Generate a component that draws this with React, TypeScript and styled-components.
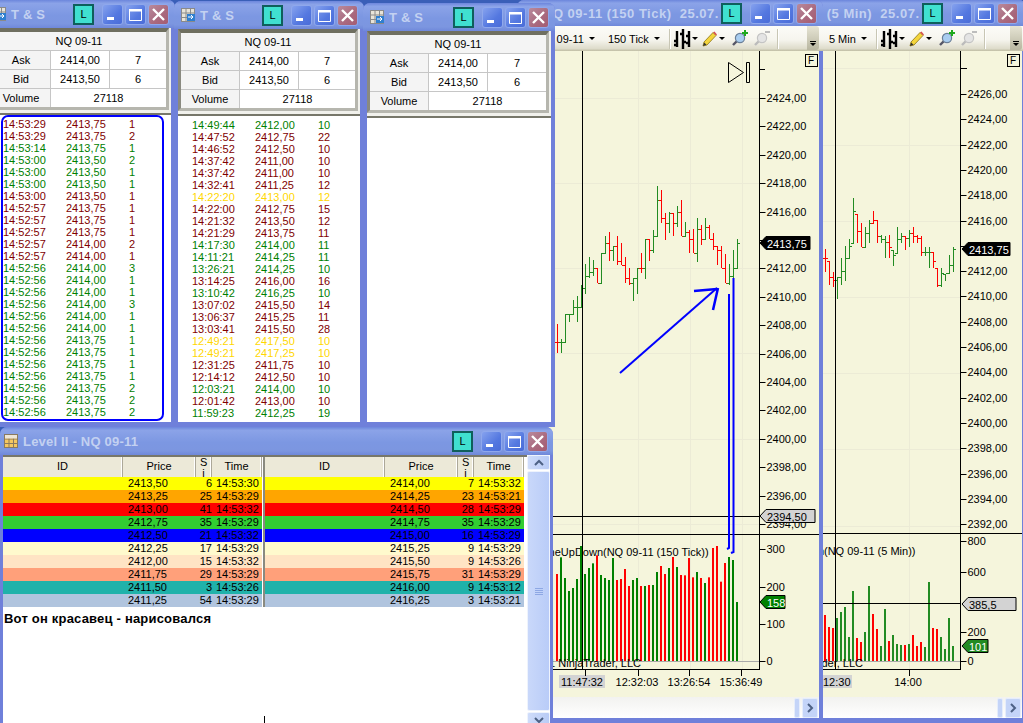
import type { ReactNode } from 'react';
import styled, { createGlobalStyle } from 'styled-components';

const GlobalStyle = createGlobalStyle`
  html, body {
    margin: 0;
    height: 100%;
    overflow: hidden;
    background: #3a5fb8;
  }
  #root {
    height: 100%;
  }
  * {
    box-sizing: border-box;
  }
`;

const FONT = '"Liberation Sans", Arial, sans-serif';
const RED = '#800000';
const GREEN = '#008000';
const GOLD = '#ffd700';

const Desktop = styled.div`
  position: relative;
  width: 1023px;
  height: 723px;
  overflow: hidden;
  font-family: ${FONT};
  font-size: 11px;
  color: #000;
`;

const Frame = styled.div<{ $left: number; $top: number; $width: number; $height: number; $z: number }>`
  position: absolute;
  left: ${({ $left }) => $left}px;
  top: ${({ $top }) => $top}px;
  width: ${({ $width }) => $width}px;
  height: ${({ $height }) => $height}px;
  z-index: ${({ $z }) => $z};
  display: flex;
  flex-direction: column;
  background: #6f80da;
  border-radius: 7px 7px 0 0;
  padding: 0 4px;
`;

const TitleBar = styled.div<{ $height: number; $padLeft?: number; $padRight?: number }>`
  flex: none;
  height: ${({ $height }) => $height}px;
  margin: 0 -4px;
  padding: 0 ${({ $padRight }) => $padRight ?? 6}px 0 ${({ $padLeft }) => $padLeft ?? 7}px;
  display: flex;
  align-items: center;
  border-radius: 7px 7px 0 0;
  background: linear-gradient(180deg, #6c86dc 0%, #8ba3e8 12%, #7c97e2 55%, #7c96e0 85%, #6f88da 100%);
`;

const TitleText = styled.div<{ $wide?: boolean }>`
  flex: 1;
  min-width: 0;
  margin-left: 5px;
  overflow: hidden;
  white-space: pre;
  font-size: 13px;
  font-weight: bold;
  letter-spacing: ${({ $wide }) => ($wide ? '0.5px' : '0.2px')};
  color: #c3d1f1;
`;

const LinkButton = styled.div`
  flex: none;
  width: 21px;
  height: 21px;
  margin-right: 6px;
  display: flex;
  align-items: center;
  justify-content: center;
  border: 2px solid #0f5f5c;
  background: #40e0d0;
  font-size: 11px;
`;

const CaptionButton = styled.div<{ $close?: boolean }>`
  flex: none;
  width: 21px;
  height: 21px;
  margin-left: 2px;
  display: flex;
  align-items: center;
  justify-content: center;
  border-radius: 3px;
  border: 1px solid #8fa8ec;
  background: ${({ $close }) =>
    $close
      ? 'linear-gradient(135deg, #b98a9c 0%, #a9697e 60%, #a45c72 100%)'
      : 'linear-gradient(135deg, #86a2ee 0%, #5478e0 60%, #4a6cd8 100%)'};
`;

const GridIcon = () => (
  <svg width="14" height="14" viewBox="0 0 14 14">
    <rect x="0.5" y="0.5" width="13" height="13" fill="#e8e4d8" stroke="#8a8a8a" />
    <path d="M0 5h14M0 9.5h14M5 0v14M9.5 0v14" stroke="#8a8a8a" />
    <rect x="6" y="6" width="8" height="7" fill="#2f7fd0" />
    <path d="M7 9h5M10 7l2 2-2 2" stroke="#fff" fill="none" />
  </svg>
);

const LevelIcon = () => (
  <svg width="14" height="14" viewBox="0 0 14 14">
    <rect x="0.5" y="0.5" width="13" height="13" fill="#f6c860" stroke="#8a7a60" />
    <path d="M0 5h14M0 9.5h14M5 0v14M9.5 0v14" stroke="#8a7a60" />
    <rect x="1" y="1" width="12" height="3.5" fill="#eee6d8" />
  </svg>
);

const CaptionButtons = () => (
  <>
    <LinkButton>L</LinkButton>
    <CaptionButton>
      <svg width="13" height="13" viewBox="0 0 13 13">
        <rect x="1" y="9" width="7" height="3" fill="#fff" />
      </svg>
    </CaptionButton>
    <CaptionButton>
      <svg width="15" height="15" viewBox="0 0 15 15">
        <path d="M1.5 3.5h12v10h-12z" fill="none" stroke="#fff" />
        <rect x="1" y="2" width="13" height="2.5" fill="#fff" />
      </svg>
    </CaptionButton>
    <CaptionButton $close>
      <svg width="15" height="15" viewBox="0 0 15 15">
        <path d="M2 2l11 11M13 2L2 13" stroke="#fff" strokeWidth="2.4" />
      </svg>
    </CaptionButton>
  </>
);

/* T&S windows */

const QuoteGrid = styled.div`
  flex: none;
  width: calc(100% - 2px);
  display: grid;
  grid-template-columns: 58px 58px 1fr;
  grid-auto-rows: 18px;
  gap: 1px;
  border: 3px solid #b6b6ae;
  border-top: 4px solid #6f6f60;
  border-left-color: #8a8a80;
  background: #c6c6c6;
  box-shadow: 2px 0 0 #f1f1ec;
`;

const QuoteCell = styled.div<{ $span?: number; $shade?: boolean }>`
  grid-column: span ${({ $span }) => $span ?? 1};
  display: flex;
  align-items: center;
  justify-content: center;
  background: ${({ $shade }) => ($shade ? '#f4f4f4' : '#fff')};
`;

const TradeList = styled.div`
  flex: 1;
  min-height: 0;
  margin: 3px 0 5px;
  padding: 3px 0 0 14px;
  border-top: 2px solid #77776a;
  background: #fff;
  box-shadow: 0 -3px 0 #f1f1ec;
`;

const TradeRow = styled.div<{ $color: string }>`
  display: grid;
  grid-template-columns: 63px 63px 1fr;
  height: 12px;
  line-height: 12px;
  white-space: nowrap;
  color: ${({ $color }) => $color};
`;

type Trade = [string, string, string, string];

const tradesA: Trade[] = [
  ['14:53:29', '2413,75', '1', RED], ['14:53:29', '2413,75', '2', RED], ['14:53:14', '2413,75', '1', GREEN],
  ['14:53:00', '2413,50', '2', GREEN], ['14:53:00', '2413,50', '1', GREEN], ['14:53:00', '2413,50', '1', GREEN],
  ['14:53:00', '2413,50', '1', RED], ['14:52:57', '2413,75', '1', RED], ['14:52:57', '2413,75', '1', RED],
  ['14:52:57', '2413,75', '1', RED], ['14:52:57', '2414,00', '2', RED], ['14:52:57', '2414,00', '1', RED],
  ['14:52:56', '2414,00', '3', GREEN], ['14:52:56', '2414,00', '1', GREEN], ['14:52:56', '2414,00', '1', GREEN],
  ['14:52:56', '2414,00', '3', GREEN], ['14:52:56', '2414,00', '1', GREEN], ['14:52:56', '2414,00', '1', GREEN],
  ['14:52:56', '2413,75', '1', GREEN], ['14:52:56', '2413,75', '1', GREEN], ['14:52:56', '2413,75', '1', GREEN],
  ['14:52:56', '2413,75', '1', GREEN], ['14:52:56', '2413,75', '2', GREEN], ['14:52:56', '2413,75', '2', GREEN],
  ['14:52:56', '2413,75', '2', GREEN],
];

const tradesB: Trade[] = [
  ['14:49:44', '2412,00', '10', GREEN], ['14:47:52', '2412,75', '22', RED], ['14:46:52', '2412,50', '10', RED],
  ['14:37:42', '2411,00', '10', RED], ['14:37:42', '2411,00', '10', RED], ['14:32:41', '2411,25', '12', RED],
  ['14:22:20', '2413,00', '12', GOLD], ['14:22:00', '2412,75', '15', RED], ['14:21:32', '2413,50', '12', RED],
  ['14:21:29', '2413,75', '11', RED], ['14:17:30', '2414,00', '11', GREEN], ['14:11:21', '2414,25', '11', GREEN],
  ['13:26:21', '2414,25', '10', GREEN], ['13:14:25', '2416,00', '16', RED], ['13:10:42', '2416,25', '10', GREEN],
  ['13:07:02', '2415,50', '14', RED], ['13:06:37', '2415,25', '11', RED], ['13:03:41', '2415,50', '28', RED],
  ['12:49:21', '2417,50', '10', GOLD], ['12:49:21', '2417,25', '10', GOLD], ['12:31:25', '2411,75', '10', RED],
  ['12:14:12', '2412,50', '10', RED], ['12:03:21', '2414,00', '10', GREEN], ['12:01:42', '2413,00', '10', RED],
  ['11:59:23', '2412,25', '19', GREEN],
];

const TimeSalesWindow = ({ left, top, width, z, trades }: { left: number; top: number; width: number; z: number; trades: Trade[] }) => (
  <Frame $left={left} $top={top} $width={width} $height={427 - top} $z={z}>
    <TitleBar $height={28}>
      <GridIcon />
      <TitleText>T &amp; S</TitleText>
      <CaptionButtons />
    </TitleBar>
    <QuoteGrid>
      <QuoteCell $span={3} $shade>NQ 09-11</QuoteCell>
      <QuoteCell $shade>Ask</QuoteCell>
      <QuoteCell>2414,00</QuoteCell>
      <QuoteCell>7</QuoteCell>
      <QuoteCell $shade>Bid</QuoteCell>
      <QuoteCell>2413,50</QuoteCell>
      <QuoteCell>6</QuoteCell>
      <QuoteCell $shade>Volume</QuoteCell>
      <QuoteCell $span={2}>27118</QuoteCell>
    </QuoteGrid>
    <TradeList>
      {trades.map((t, i) => (
        <TradeRow key={i} $color={t[3]}>
          <span>{t[0]}</span>
          <span>{t[1]}</span>
          <span>{t[2]}</span>
        </TradeRow>
      ))}
    </TradeList>
  </Frame>
);

/* Level II */

const LevelBody = styled.div`
  flex: 1;
  min-height: 0;
  margin: 0 -1px;
  display: flex;
  background: #fff;
`;

const LevelMain = styled.div`
  position: relative;
  flex: 1;
  min-width: 0;
  padding-right: 3px;
  background: #fff;
  border-top: 2px solid #77776a;
`;

const Books = styled.div`
  display: flex;
  gap: 3px;
`;

const Book = styled.div`
  width: 259px;
  & + & {
    box-shadow: -2px 0 0 #8a8a80;
  }
`;

const depthColumns = '120px 73px 16px 1fr';

const BookHeader = styled.div`
  display: grid;
  grid-template-columns: ${depthColumns};
  height: 20px;
  background: #ece9d8;
`;

const HeaderCell = styled.div<{ $narrow?: boolean }>`
  overflow: hidden;
  text-align: center;
  padding: 0 ${({ $narrow }) => ($narrow ? '4px' : '0')};
  line-height: ${({ $narrow }) => ($narrow ? '11px' : '19px')};
  word-break: break-all;
  border-right: 1px solid #aca899;
  box-shadow: inset -1px 0 0 #fff;
`;

const DepthRow = styled.div<{ $bg: string }>`
  display: grid;
  grid-template-columns: ${depthColumns};
  height: 13px;
  line-height: 13px;
  white-space: nowrap;
  background: ${({ $bg }) => $bg};
`;

const PriceCell = styled.span`
  padding-left: 5px;
`;

const SizeCell = styled.span`
  text-align: right;
`;

const TimeCell = styled.span`
  padding-left: 4px;
`;

const Note = styled.div`
  padding: 4px 0 0 1px;
  font-size: 13px;
  font-weight: bold;
  letter-spacing: 0.2px;
`;

const CaretMark = styled.div`
  position: absolute;
  left: 261px;
  bottom: 0;
  width: 1px;
  height: 11px;
  background: #000;
`;

const ScrollBar = styled.div`
  flex: none;
  width: 23px;
  display: flex;
  flex-direction: column;
  gap: 1px;
  background: #fff;
`;

const ScrollButton = styled.div`
  flex: none;
  height: 15px;
  display: flex;
  align-items: center;
  justify-content: center;
  border-radius: 2px;
  border: 1px solid #eef3fd;
  background: linear-gradient(90deg, #cfdcfa, #b8cbf6);
`;

const ScrollTrack = styled.div`
  flex: 1;
  display: flex;
  flex-direction: column;
  align-items: center;
  justify-content: center;
  gap: 1px;
  border-radius: 2px;
  border: 1px solid #eef3fd;
  background: linear-gradient(90deg, #c9d8fa, #b9ccf8);
`;

const GripLine = styled.div`
  width: 8px;
  height: 1px;
  background: #8ea8e4;
`;

const bookColors = ['#ffff00', '#ffa500', '#ff0000', '#32cd32', '#0000ff', '#fffacd', '#ffe4c4', '#ffa07a', '#20b2aa', '#b0c4de'];

const bidRows = [
  ['2413,50', '6', '14:53:30'], ['2413,25', '25', '14:53:29'], ['2413,00', '41', '14:53:32'],
  ['2412,75', '35', '14:53:29'], ['2412,50', '21', '14:53:32'], ['2412,25', '17', '14:53:29'],
  ['2412,00', '15', '14:53:32'], ['2411,75', '29', '14:53:29'], ['2411,50', '3', '14:53:26'],
  ['2411,25', '54', '14:53:29'],
];

const askRows = [
  ['2414,00', '7', '14:53:32'], ['2414,25', '23', '14:53:21'], ['2414,50', '28', '14:53:29'],
  ['2414,75', '35', '14:53:29'], ['2415,00', '16', '14:53:29'], ['2415,25', '9', '14:53:29'],
  ['2415,50', '9', '14:53:26'], ['2415,75', '31', '14:53:29'], ['2416,00', '9', '14:53:12'],
  ['2416,25', '3', '14:53:21'],
];

const DepthBook = ({ rows }: { rows: string[][] }) => (
  <Book>
    <BookHeader>
      <HeaderCell>ID</HeaderCell>
      <HeaderCell>Price</HeaderCell>
      <HeaderCell $narrow>Si</HeaderCell>
      <HeaderCell>Time</HeaderCell>
    </BookHeader>
    {rows.map((r, i) => (
      <DepthRow key={i} $bg={bookColors[i]}>
        <span />
        <PriceCell>{r[0]}</PriceCell>
        <SizeCell>{r[1]}</SizeCell>
        <TimeCell>{r[2]}</TimeCell>
      </DepthRow>
    ))}
  </Book>
);

const LevelWindow = () => (
  <Frame $left={0} $top={427} $width={553} $height={300} $z={5}>
    <TitleBar $height={28} $padLeft={4} $padRight={5}>
      <LevelIcon />
      <TitleText>Level II - NQ 09-11</TitleText>
      <CaptionButtons />
    </TitleBar>
    <LevelBody>
      <LevelMain>
        <Books>
          <DepthBook rows={bidRows} />
          <DepthBook rows={askRows} />
        </Books>
        <Note>Вот он красавец - нарисовался</Note>
        <CaretMark />
      </LevelMain>
      <ScrollBar>
        <ScrollButton>
          <svg width="10" height="8" viewBox="0 0 10 8"><path d="M1 6l4-4 4 4" fill="none" stroke="#4d6185" strokeWidth="2" /></svg>
        </ScrollButton>
        <ScrollTrack>
          {[0, 1, 2, 3].map(i => <GripLine key={i} />)}
        </ScrollTrack>
        <ScrollButton>
          <svg width="10" height="8" viewBox="0 0 10 8"><path d="M1 2l4 4 4-4" fill="none" stroke="#4d6185" strokeWidth="2" /></svg>
        </ScrollButton>
      </ScrollBar>
    </LevelBody>
  </Frame>
);

/* Chart windows */

const Toolbar = styled.div`
  flex: none;
  height: 25px;
  margin-right: -4px;
  display: flex;
  align-items: center;
  padding-left: 16px;
  font-size: 11px;
  background: linear-gradient(180deg, #fcfcf8 0%, #f6f5ee 55%, #dedccb 90%, #bfbda4 100%);
  white-space: nowrap;
`;

const ToolText = styled.span`
  margin-right: 5px;
`;

const Caret = styled.i<{ $before?: number; $after?: number }>`
  flex: none;
  width: 0;
  height: 0;
  margin-left: ${({ $before }) => $before ?? 0}px;
  margin-right: ${({ $after }) => $after ?? 0}px;
  border: 3px solid transparent;
  border-top: 3px solid #000;
  border-bottom: 0;
`;

const ToolSep = styled.i<{ $before: number; $after: number }>`
  flex: none;
  width: 1px;
  height: 20px;
  margin: 0 ${({ $after }) => $after}px 0 ${({ $before }) => $before}px;
  background: #c8c6b4;
  box-shadow: 1px 0 0 #fff;
`;

const ZoomGap = styled.i`
  flex: none;
  width: 5px;
`;

const OverflowTab = styled.div`
  position: absolute;
  right: 4px;
  top: 26px;
  width: 12px;
  height: 24px;
  display: flex;
  flex-direction: column;
  align-items: center;
  justify-content: flex-end;
  gap: 1px;
  padding-bottom: 4px;
  border-radius: 0 3px 3px 0;
  background: linear-gradient(180deg, #e6e4d4, #b8b6a0);
`;

const OverflowBar = styled.b`
  width: 6px;
  height: 1px;
  background: #000;
`;

const ChartCanvas = styled.svg`
  flex: none;
  display: block;
  background: #f5f5dc;
`;

const BottomStrip = styled.div`
  flex: none;
  height: 21px;
  display: flex;
  align-items: center;
  justify-content: flex-end;
  gap: 2px;
  padding-right: 1px;
  background: linear-gradient(180deg, #f2f2f0 0%, #ffffff 100%);
`;

const StripThumb = styled.div`
  width: 6px;
  height: 20px;
  border: 1px solid #e6edfb;
  border-radius: 2px;
  background: #c4d4f8;
`;

const StripButton = styled.div`
  width: 16px;
  height: 20px;
  display: flex;
  align-items: center;
  justify-content: center;
  border: 1px solid #e6edfb;
  border-radius: 2px;
  background: #c4d4f8;
`;

const BottomEdge = styled.div`
  flex: 1;
  margin: 0 -4px;
  background: #6f80da;
`;

const BarsIcon = () => (
  <svg width="19" height="22" viewBox="0 0 19 22">
    <path d="M4 3v16M10 1v20M16 3v16" stroke="#000" strokeWidth="2.4" />
    <path d="M1 13h3M1 17h3M10 6h-3M10 14h3M13 8h3M13 15h3" stroke="#000" strokeWidth="2.4" />
  </svg>
);

const PencilIcon = () => (
  <svg width="16" height="16" viewBox="0 0 16 16">
    <path d="M2 11L11 1.5l3 3L5 14l-4 1z" fill="#f4d53c" stroke="#8a7414" strokeWidth="0.8" />
    <path d="M11 1.5l3 3 1-1-2.5-3z" fill="#d65050" />
    <path d="M1 15l1.2-3.5 2.3 2.3z" fill="#333" />
  </svg>
);

const ZoomIcon = ({ dim }: { dim?: boolean }) => (
  <svg width="17" height="17" viewBox="0 0 17 17">
    <path d="M2 15l4-4" stroke={dim ? '#bbb' : '#556'} strokeWidth="2.4" />
    <circle cx="9" cy="8" r="4.6" fill={dim ? '#e4e4e4' : '#a9cdf0'} stroke={dim ? '#c4c4c4' : '#6a7f98'} strokeWidth="1.2" />
    {dim ? (
      <path d="M12 2h5" stroke="#bdbdbd" strokeWidth="2" />
    ) : (
      <path d="M14 0v6M11 3h6" stroke="#1faa1f" strokeWidth="2" />
    )}
  </svg>
);

const ChartTools = ({ period, afterSymbol }: { period: string; afterSymbol: number }) => (
  <>
    <ToolText>NQ 09-11</ToolText>
    <Caret $after={afterSymbol} />
    <ToolText>{period}</ToolText>
    <Caret />
    <ToolSep $before={9} $after={3} />
    <BarsIcon />
    <Caret $after={4} />
    <PencilIcon />
    <Caret $before={1} $after={6} />
    <ZoomIcon />
    <ZoomGap />
    <ZoomIcon dim />
    <ToolSep $before={7} $after={0} />
  </>
);

type Ohlc = [number, number, number, 'r' | 'g'];

const bars1: Ohlc[] = [
  [462, 550, 517, 'r'], [507, 550, 517, 'g'], [432, 518, 432, 'g'], [432, 456, 432, 'g'], [390, 432, 411, 'g'],
  [378, 456, 411, 'g'], [345, 411, 355, 'g'], [282, 372, 318, 'g'], [260, 324, 305, 'g'], [270, 318, 295, 'g'],
  [294, 340, 340, 'r'], [250, 340, 250, 'g'], [198, 250, 220, 'g'], [186, 272, 240, 'r'], [228, 272, 228, 'g'],
  [198, 285, 272, 'r'], [220, 285, 285, 'r'], [262, 340, 325, 'r'], [294, 345, 338, 'r'], [325, 392, 325, 'g'],
  [294, 372, 294, 'g'], [250, 308, 294, 'r'], [207, 326, 207, 'g'], [207, 274, 240, 'r'], [180, 250, 198, 'g'],
  [48, 200, 90, 'g'], [60, 158, 144, 'r'], [130, 210, 158, 'r'], [125, 188, 130, 'g'], [130, 198, 158, 'r'],
  [108, 170, 125, 'g'], [90, 198, 198, 'r'], [155, 198, 185, 'g'], [180, 250, 207, 'r'], [178, 250, 250, 'r'],
  [145, 275, 178, 'g'], [165, 225, 207, 'r'], [145, 208, 170, 'g'], [165, 208, 207, 'r'], [190, 240, 228, 'r'],
  [228, 285, 240, 'r'], [228, 295, 295, 'r'], [252, 340, 340, 'r'], [282, 345, 318, 'g'], [240, 325, 295, 'g'],
  [207, 295, 220, 'g'],
];

const bars2: Ohlc[] = [
  [237, 305, 265, 'r'], [272, 345, 320, 'r'], [305, 352, 330, 'r'], [320, 388, 322, 'g'], [265, 345, 303, 'g'],
  [228, 332, 265, 'g'], [208, 265, 228, 'g'], [85, 218, 122, 'g'], [132, 218, 182, 'r'], [158, 230, 230, 'r'],
  [172, 232, 188, 'g'], [150, 218, 158, 'g'], [122, 160, 150, 'r'], [150, 218, 198, 'r'], [195, 218, 208, 'g'],
  [198, 265, 215, 'g'], [195, 265, 232, 'r'], [240, 288, 255, 'g'], [172, 248, 208, 'g'], [188, 218, 198, 'g'],
  [198, 240, 205, 'r'], [180, 232, 188, 'g'], [170, 218, 198, 'r'], [195, 218, 205, 'r'], [198, 258, 245, 'r'],
  [230, 258, 245, 'g'], [230, 295, 245, 'g'], [245, 295, 272, 'r'], [295, 352, 345, 'r'], [295, 352, 310, 'g'],
  [312, 332, 310, 'g'], [255, 312, 285, 'g'], [230, 305, 238, 'g'],
];

const vol1: [number, 'r' | 'g'][] = [
  [462, 'r'], [412, 'g'], [474, 'g'], [513, 'g'], [504, 'g'], [477, 'g'], [378, 'g'], [462, 'g'], [444, 'g'],
  [430, 'g'], [406, 'r'], [465, 'g'], [474, 'g'], [480, 'g'], [414, 'g'], [480, 'r'], [477, 'r'], [447, 'r'],
  [498, 'r'], [480, 'g'], [474, 'g'], [498, 'r'], [498, 'g'], [495, 'r'], [495, 'g'], [456, 'g'], [438, 'r'],
  [462, 'r'], [444, 'g'], [411, 'r'], [441, 'g'],
];

const vol1b: [number, 'r' | 'g'][] = [
  [225, 'r'], [226, 'r'], [174, 'r'], [232, 'r'], [216, 'g'], [234, 'r'], [249, 'g'], [232, 'r'], [144, 'r'],
  [138, 'r'], [245, 'r'], [189, 'r'], [171, 'g'], [180, 'g'], [306, 'g'],
];

const vol2: [number, 'r' | 'g'][] = [
  [345, 'r'], [381, 'r'], [384, 'r'], [354, 'g'], [336, 'g'], [321, 'g'], [411, 'g'], [273, 'g'], [414, 'r'],
  [426, 'r'], [396, 'g'], [258, 'g'], [342, 'r'], [387, 'r'], [438, 'g'], [327, 'g'], [423, 'r'], [405, 'g'],
  [432, 'g'], [435, 'g'], [435, 'r'], [432, 'g'], [405, 'r'], [438, 'r'], [426, 'r'], [441, 'g'], [246, 'g'],
  [384, 'r'], [387, 'r'], [411, 'g'], [447, 'g'], [354, 'g'], [438, 'g'],
];

const FOREST = '#228b22';

const PriceBars = ({ data, x0, originY, green }: { data: Ohlc[]; x0: number; originY: number; green: string }) => (
  <g shapeRendering="crispEdges">
    {data.map((b, i) => {
      const x = x0 + i * 4;
      const stroke = b[3] === 'r' ? '#ff0000' : green;
      const prev = i > 0 ? data[i - 1][2] : b[2];
      const open = Math.min(Math.max(prev, b[0]), b[1]);
      return (
        <g key={i} stroke={stroke} strokeWidth="1" fill="none">
          <path d={`M${x + 0.5} ${Math.round(originY + b[0] / 3)}V${Math.round(originY + b[1] / 3)}`} />
          <path d={`M${x - 2} ${Math.round(originY + open / 3) + 0.5}H${x + 0.5}M${x + 0.5} ${Math.round(originY + b[2] / 3) + 0.5}H${x + 3}`} />
        </g>
      );
    })}
  </g>
);

const VolBars = ({ data, x0, toY, base, green }: { data: [number, 'r' | 'g'][]; x0: number; toY: (v: number) => number; base: number; green: string }) => (
  <>
    {data.map((b, i) => {
      const top = toY(b[0]);
      return <rect key={i} x={x0 + i * 4} y={top} width="2" height={base - top} fill={b[1] === 'r' ? '#ff0000' : green} />;
    })}
  </>
);

const Tag = ({ x, y, w, bg, fg, label }: { x: number; y: number; w: number; bg: string; fg: string; label: string }) => (
  <g>
    <path d={`M${x} ${y}l6 -6.5H${x + w}V${y + 6.5}H${x + 6}z`} fill={bg} stroke="#000" />
    <text x={x + 7} y={y + 4.5} fill={fg} fontSize="11">{label}</text>
  </g>
);

const fmtPrice = (n: number) => `${n},00`;

const AxisTicks = ({ axis, items }: { axis: number; items: [number, string][] }) => (
  <>
    {items.map(([y, label]) => (
      <g key={`${y}`}>
        <path d={`M${axis} ${y + 0.5}h6`} stroke="#000" />
        <text x={axis + 7} y={y + 4} fontSize="11">{label}</text>
      </g>
    ))}
  </>
);

const ChartOne = () => {
  const prices: [number, string][] = [];
  for (let i = 0; i < 16; i++) {
    prices.push([Math.round(98 + i * 28.4), fmtPrice(2424 - i * 2)]);
  }
  const vols: [number, string][] = [[549, '300'], [587, '200'], [624, '100'], [661, '0']];
  return (
    <ChartCanvas width={298} height={646} viewBox="521 51 298 646" fontFamily={FONT} fontSize="11">
      <g stroke="#ecebd6">
        {[98, 183, 268, 353, 439, 524].map(y => <path key={y} d={`M521 ${y + 0.5}H759`} />)}
        {[638, 690, 742].map(x => <path key={x} d={`M${x + 0.5} 51V669`} />)}
      </g>
      <PriceBars data={bars1} x0={557} originY={170} green={FOREST} />
      <text x="603" y="556" textAnchor="end">VolumeUpDown</text>
      <text x="603" y="556">(NQ 09-11 (150 Tick))</text>
      <path d="M521 661.5H759" stroke="#aaa" />
      <VolBars data={vol1} x0={556} toY={v => 420 + v / 3} base={661} green={GREEN} />
      <VolBars data={vol1b} x0={680} toY={v => 500 + v / 3} base={661} green={GREEN} />
      <text x="641" y="667" textAnchor="end">© 2011 NinjaTrader, LLC</text>
      <path d="M582.5 51V670M521 516.5H759M521 534.5H819M521 669.5H759.5M759.5 51V670" stroke="#000" fill="none" />
      <path d="M759 69.5h6" stroke="#000" />
      <AxisTicks axis={759.5} items={prices} />
      <AxisTicks axis={759.5} items={vols} />
      <Tag x={760} y={516} w={55} bg="#d3d3d3" fg="#000" label="2394,50" />
      <Tag x={760} y={243} w={50} bg="#000" fg="#fff" label="2413,75" />
      <Tag x={760} y={602} w={25} bg={GREEN} fg="#fff" label="158" />
      <rect x="559" y="675" width="46" height="13" fill="#d3d3d3" />
      {([[585, '11:47:32', 582], [638, '12:32:03', 637], [689, '13:26:54', 689], [741, '15:36:49', 741]] as [number, string, number][]).map(([tick, t, cx]) => (
        <g key={t}>
          <path d={`M${tick + 0.5} 670v6`} stroke="#000" />
          <text x={cx} y="686" textAnchor="middle">{t}</text>
        </g>
      ))}
      <rect x="805.5" y="54.5" width="12" height="12" fill="none" stroke="#000" />
      <text x="808" y="64" fontSize="10">F</text>
      <path d="M728.5 62.5l15 10-15 10zM746.5 62.5h3v20h-3z" fill="none" stroke="#000" />
    </ChartCanvas>
  );
};

const ChartTwo = () => {
  const prices: [number, string][] = [];
  for (let i = 0; i < 18; i++) {
    prices.push([Math.round(94 + i * 25.3), fmtPrice(2426 - i * 2)]);
  }
  const vols: [number, string][] = [[541, '800'], [572, '600'], [632, '200'], [661, '0']];
  return (
    <ChartCanvas width={281} height={646} viewBox="741 51 281 646" fontFamily={FONT} fontSize="11">
      <g stroke="#ecebd6">
        {[68, 145, 221, 297, 373, 449, 526].map(y => <path key={y} d={`M741 ${y + 0.5}H961`} />)}
        <path d="M909.5 51V669" />
      </g>
      <PriceBars data={bars2} x0={825} originY={170} green={FOREST} />
      <text x="824" y="555" textAnchor="end">VolumeUpDown</text>
      <text x="824" y="555">(NQ 09-11 (5 Min))</text>
      <path d="M741 661.5H961" stroke="#aaa" />
      <VolBars data={vol2} x0={824} toY={v => 500 + v / 3} base={661} green={FOREST} />
      <text x="863" y="667" textAnchor="end">© 2011 NinjaTrader, LLC</text>
      <path d="M835.5 51V670M741 533.5H1023M741 603.5H961M741 669.5H961M960.5 51V670" stroke="#000" fill="none" />
      <path d="M961 68.5h6" stroke="#000" />
      <AxisTicks axis={960.5} items={prices} />
      <AxisTicks axis={960.5} items={vols} />
      <Tag x={962} y={249} w={48} bg="#000" fg="#fff" label="2413,75" />
      <Tag x={962} y={604} w={54} bg="#d3d3d3" fg="#000" label="385,5" />
      <Tag x={962} y={646} w={26} bg={FOREST} fg="#fff" label="101" />
      <rect x="823" y="675" width="29" height="13" fill="#d3d3d3" />
      <text x="823" y="686">12:30</text>
      <path d="M909.5 670v6" stroke="#000" />
      <text x="908" y="686" textAnchor="middle">14:00</text>
      <rect x="1007.5" y="54.5" width="12" height="12" fill="none" stroke="#000" />
      <text x="1010" y="64" fontSize="10">F</text>
    </ChartCanvas>
  );
};

const ChartWindow = ({ left, width, z, padRight, title, tools, children }: {
  left: number; width: number; z: number; padRight: number; title: string; tools: ReactNode; children: ReactNode;
}) => (
  <Frame $left={left} $top={0} $width={width} $height={723} $z={z}>
    <TitleBar $height={26} $padRight={padRight}>
      <GridIcon />
      <TitleText $wide>{title}</TitleText>
      <CaptionButtons />
    </TitleBar>
    <Toolbar>{tools}</Toolbar>
    {children}
    <BottomStrip>
      <StripThumb />
      <StripButton>
        <svg width="8" height="10" viewBox="0 0 8 10"><path d="M2 1l4 4-4 4" fill="none" stroke="#4d6185" strokeWidth="2" /></svg>
      </StripButton>
    </BottomStrip>
    <BottomEdge />
    <OverflowTab>
      <OverflowBar />
      <Caret />
    </OverflowTab>
  </Frame>
);

const Overlay = styled.svg`
  position: absolute;
  left: 0;
  top: 0;
  z-index: 9;
  pointer-events: none;
`;

const Annotations = () => (
  <Overlay width={1023} height={723} fill="none" stroke="#0000ff" strokeWidth="2">
    <rect x="2" y="116" width="161" height="304" rx="6" />
    <path d="M620 373L717 288" />
    <path d="M694 291L717 289M713 310L718 288" strokeWidth="2.5" />
    <path d="M729 294V548L727 549M733.5 278V552L731 553" />
  </Overlay>
);

const App = () => (
  <Desktop>
    <GlobalStyle />
    <ChartWindow
      left={737}
      width={289}
      z={1}
      padRight={8}
      title="NQ 09-11 (5 Min)  25.07."
      tools={<ChartTools period="5 Min" afterSymbol={14} />}
    >
      <ChartTwo />
    </ChartWindow>
    <ChartWindow
      left={517}
      width={306}
      z={2}
      padRight={6}
      title="NQ 09-11 (150 Tick)  25.07."
      tools={<ChartTools period="150 Tick" afterSymbol={13} />}
    >
      <ChartOne />
    </ChartWindow>
    <TimeSalesWindow left={-15} top={0} width={190} z={3} trades={tradesA} />
    <TimeSalesWindow left={174} top={1} width={190} z={4} trades={tradesB} />
    <TimeSalesWindow left={363} top={3} width={192} z={4} trades={[]} />
    <LevelWindow />
    <Annotations />
  </Desktop>
);

export default App;
